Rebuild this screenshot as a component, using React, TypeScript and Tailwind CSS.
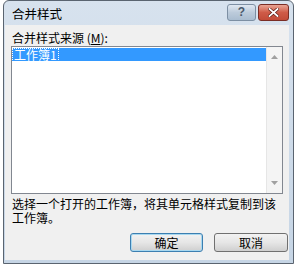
import React from 'react'

const FONT = { fontFamily: '"Noto Sans CJK SC", "Liberation Sans", sans-serif' }

export default function App() {
  return (
    <div className="relative h-[267px] w-[296px] bg-white" style={FONT}>
      <div className="ml-[3px] flex h-[264px] w-[291px] flex-col rounded-t-[6px] border border-[#5a6470] bg-gradient-to-b from-[#d7e2ee] to-[#c6d5e5]">
        {/* title bar */}
        <div className="flex h-[24px] shrink-0 items-center pl-[8px] pr-[4px]">
          <span className="mt-[2px] text-[12.5px] leading-none text-black">合并样式</span>
          <div className="ml-auto mt-[-2px] flex items-center gap-[2px]">
            <div className="flex h-[17px] w-[29px] items-center justify-center rounded-[3px] border border-[#7d8fa3] bg-gradient-to-b from-[#e0e8f1] via-[#bccbdb] to-[#aabdd0]">
              <span className="text-[12px] font-bold leading-none text-[#4a5a6c]" style={{ fontFamily: '"Liberation Sans", sans-serif' }}>?</span>
            </div>
            <div className="flex h-[17px] w-[31px] items-center justify-center rounded-[3px] border border-[#7a2d25] bg-gradient-to-b from-[#e8a494] via-[#cf5b48] to-[#c24b38]">
              <svg width="11" height="9" viewBox="0 0 11 9">
                <path d="M1.5 1 L9.5 8 M9.5 1 L1.5 8" stroke="#5a1a12" strokeWidth="3.2" strokeLinecap="square" />
                <path d="M1.5 1 L9.5 8 M9.5 1 L1.5 8" stroke="#ffffff" strokeWidth="1.8" strokeLinecap="square" />
              </svg>
            </div>
          </div>
        </div>

        {/* client area */}
        <div className="mb-[3px] ml-[1px] mr-[4px] flex flex-1 flex-col bg-[#f0f0f0] pl-[6px]">
          <div className="pl-[1px] pt-[6px] text-[12px] leading-[14px] text-black">
            合并样式来源 (<span className="underline">M</span>):
          </div>

          <div className="mt-[1px] flex h-[148px] w-[272px] border border-[#828790] bg-white">
            <div className="flex-1 pt-[1px]">
              <div className="flex h-[13px] items-center bg-[#3399ff] pl-[1px]">
                <span className="outline-1 outline-dotted outline-white px-[1px] text-[12px] leading-[12px] text-white">工作簿1</span>
              </div>
            </div>
            <div className="flex w-[16px] flex-col items-center justify-between border-l border-[#e6e6e6] bg-[#f4f4f4] py-[8px]">
              <svg width="7" height="4" viewBox="0 0 7 4">
                <path d="M0 4 L3.5 0 L7 4 Z" fill="#a0a0a0" />
              </svg>
              <svg width="7" height="4" viewBox="0 0 7 4">
                <path d="M0 0 L3.5 4 L7 0 Z" fill="#a0a0a0" />
              </svg>
            </div>
          </div>

          <p className="mt-[3px] w-[276px] pl-[1px] text-[12px] leading-[14px] text-black">
            选择一个打开的工作簿，将其单元格样式复制到该工作簿。
          </p>

          <div className="ml-[119px] mt-[8px] flex gap-[11px]">
            <button className="h-[19px] w-[73px] rounded-[3px] border border-[#3c7fb1] bg-gradient-to-b from-[#f2f2f2] via-[#e6e6e6] to-[#cfcfcf] text-[12px] leading-none text-black shadow-[inset_0_0_0_1px_#a8d8f0]">
              确定
            </button>
            <button className="h-[19px] w-[74px] rounded-[3px] border border-[#707070] bg-gradient-to-b from-[#f2f2f2] via-[#e6e6e6] to-[#cfcfcf] text-[12px] leading-none text-black">
              取消
            </button>
          </div>
        </div>
      </div>
    </div>
  )
}
